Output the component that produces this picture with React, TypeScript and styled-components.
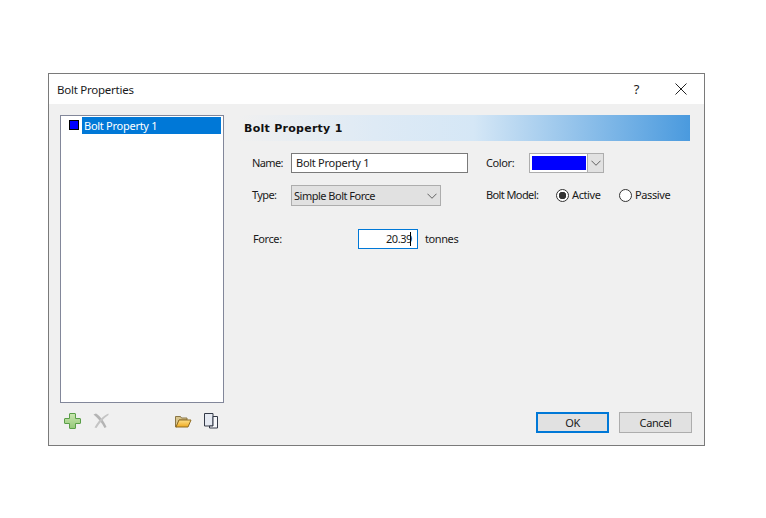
import styled, { createGlobalStyle } from "styled-components";

const GlobalStyle = createGlobalStyle`
  html, body {
    margin: 0;
    background: #fff;
  }
  body {
    font-family: "Noto Sans", "Open Sans", sans-serif;
    font-size: 11px;
    letter-spacing: -0.4px;
    color: #1a1a1a;
  }
`;

function App() {
  return (
    <Page>
      <GlobalStyle />
      <Dialog>
        <TitleBar>
          <Title>Bolt Properties</Title>
          <HelpButton>?</HelpButton>
          <CloseIcon viewBox="0 0 12 12">
            <path d="M0.5 0.5 L11.5 11.5 M11.5 0.5 L0.5 11.5" />
          </CloseIcon>
        </TitleBar>
        <Body>
          <LeftColumn>
            <PropertyList>
              <ListRow>
                <Swatch />
                <SelectedItem>Bolt Property 1</SelectedItem>
              </ListRow>
            </PropertyList>
            <Toolbar>
              <ToolGroup>
                <svg width="18" height="18" viewBox="0 0 18 18">
                  <defs>
                    <linearGradient id="plusFill" x1="0" y1="0" x2="0" y2="1">
                      <stop offset="0" stopColor="#c9e6b0" />
                      <stop offset="1" stopColor="#94c878" />
                    </linearGradient>
                  </defs>
                  <path
                    d="M6 1.500h5q.5 0 .5 .5v4.500h4.500q.5 0 .5 .5v4q0 .5-.5 .5h-4.500v4.500q0 .5-.5 .5h-5q-.5 0-.5-.5v-4.500h-4.500q-.5 0-.5-.5v-4q0-.5 .5-.5h4.500v-4.500q0-.5 .5-.5z"
                    fill="url(#plusFill)"
                    stroke="#5a9e48"
                    strokeWidth="1"
                  />
                </svg>
                <svg width="18" height="18" viewBox="0 0 18 18">
                  <path
                    d="M1.500 2.500 L4 1.500 C8 4 12 9 14.500 15 L12.500 16 C10 11 6 6 1.500 2.500z"
                    fill="#b4b4b4"
                  />
                  <path
                    d="M16.500 1.500 C11 4 6 9 2.500 15.500 L4.500 16 C7.500 11 12 6 16.500 3z"
                    fill="#c4c4c4"
                  />
                </svg>
              </ToolGroup>
              <ToolGroup>
                <svg width="18" height="18" viewBox="0 0 18 18">
                  <defs>
                    <linearGradient id="folderFill" x1="0" y1="0" x2="0" y2="1">
                      <stop offset="0" stopColor="#fde08a" />
                      <stop offset="1" stopColor="#efa91f" />
                    </linearGradient>
                  </defs>
                  <path d="M1.500 15V4.500h5l1 1.500h5.500v2H5L2.500 15z" fill="#d8c58e" stroke="#8a7646" />
                  <path d="M5 8h12l-3 7H2z" fill="url(#folderFill)" stroke="#8f6c22" />
                </svg>
                <svg width="18" height="18" viewBox="0 0 18 18">
                  <path d="M2.500 1.500h8.500v12.500h-8.500z" fill="#e6eaf2" stroke="#343a48" />
                  <path d="M11 4.500h4.500v11.500h-8v-2h3.500z" fill="#f7f8fb" stroke="#343a48" />
                </svg>
              </ToolGroup>
            </Toolbar>
          </LeftColumn>
          <RightColumn>
            <Banner>Bolt Property 1</Banner>
            <Form>
              <FormRow>
                <NameLabel>Name:</NameLabel>
                <NameInput>Bolt Property 1</NameInput>
                <ColorLabel>Color:</ColorLabel>
                <ColorPicker>
                  <ColorFill />
                  <ColorArrow>
                    <Chevron />
                  </ColorArrow>
                </ColorPicker>
              </FormRow>
              <TypeRow>
                <NameLabel>Type:</NameLabel>
                <TypeSelect>
                  Simple Bolt Force
                  <Chevron />
                </TypeSelect>
                <ModelLabel>Bolt Model:</ModelLabel>
                <RadioOption $width={63}>
                  <Radio $checked />
                  Active
                </RadioOption>
                <RadioOption $width={60}>
                  <Radio />
                  Passive
                </RadioOption>
              </TypeRow>
              <ForceRow>
                <ForceLabel>Force:</ForceLabel>
                <ForceInput>
                  20.39
                  <Caret />
                </ForceInput>
                <span>tonnes</span>
              </ForceRow>
            </Form>
            <Actions>
              <ActionButton $primary>OK</ActionButton>
              <ActionButton>Cancel</ActionButton>
            </Actions>
          </RightColumn>
        </Body>
      </Dialog>
    </Page>
  );
}

function Chevron() {
  return (
    <ChevronIcon viewBox="0 0 11 6">
      <path d="M0.500 0.500 L5.500 5.500 L10.500 0.500" />
    </ChevronIcon>
  );
}

export default App;

const Page = styled.div`
  width: 766px;
  height: 518px;
  padding: 73px 0 0 48px;
  box-sizing: border-box;
`;

const Dialog = styled.div`
  width: 657px;
  height: 373px;
  box-sizing: border-box;
  border: 1px solid #7a7a7a;
  background: #f0f0f0;
  display: flex;
  flex-direction: column;
`;

const TitleBar = styled.div`
  height: 30px;
  background: #fff;
  display: flex;
  align-items: center;
  padding: 0 17px 0 8px;
`;

const Title = styled.div`
  font-size: 11.5px;
  letter-spacing: -0.25px;
  flex: 1;
`;

const HelpButton = styled.div`
  font-size: 13px;
  margin-right: 36px;
`;

const CloseIcon = styled.svg`
  width: 12px;
  height: 12px;
  fill: none;
  stroke: #222;
  stroke-width: 1;
`;

const Body = styled.div`
  flex: 1;
  display: flex;
  padding: 11px 12px 12px 11px;
`;

const LeftColumn = styled.div`
  width: 164px;
  display: flex;
  flex-direction: column;
`;

const PropertyList = styled.div`
  height: 288px;
  box-sizing: border-box;
  border: 1px solid #82879a;
  background: #fff;
  padding: 1px 2px;
`;

const ListRow = styled.div`
  display: flex;
  align-items: center;
  padding-left: 6px;
  gap: 3px;
`;

const Swatch = styled.div`
  width: 10px;
  height: 10px;
  box-sizing: border-box;
  border: 1px solid #000;
  background: #0000ff;
  margin-top: -1px;
`;

const SelectedItem = styled.div`
  flex: 1;
  height: 17px;
  line-height: 17px;
  letter-spacing: -0.27px;
  background: #0078d7;
  color: #fff;
  padding-left: 2px;
`;

const Toolbar = styled.div`
  display: flex;
  justify-content: space-between;
  padding: 9px 4px 0 4px;
`;

const ToolGroup = styled.div`
  display: flex;
  gap: 10px;
`;

const RightColumn = styled.div`
  flex: 1;
  margin-left: 15px;
  display: flex;
  flex-direction: column;
`;

const Banner = styled.div`
  height: 26px;
  line-height: 28px;
  width: 451px;
  padding-left: 5px;
  box-sizing: border-box;
  font-family: "DejaVu Sans", sans-serif;
  font-weight: 700;
  font-size: 11px;
  letter-spacing: 0.27px;
  color: #111;
  background: linear-gradient(
    to right,
    #f0f0f0 0%,
    #deeaf5 30%,
    #d5e7f6 52%,
    #4a9ade 100%
  );
`;

const Form = styled.div`
  flex: 1;
  padding: 12px 0 0 13px;
`;

const FormRow = styled.div`
  display: flex;
  align-items: center;
  height: 20px;
  line-height: 18px;
`;

const TypeRow = styled(FormRow)`
  height: 21px;
  margin-top: 12px;
`;

const ForceRow = styled(FormRow)`
  margin-top: 23px;
`;

const NameLabel = styled.div`
  width: 39px;
  margin-top: -1px;
  letter-spacing: -0.6px;
`;

const NameInput = styled.div`
  width: 177px;
  height: 20px;
  letter-spacing: -0.27px;
  box-sizing: border-box;
  border: 1px solid #7a7a7a;
  background: #fff;
  padding-left: 4px;
`;

const ColorLabel = styled.div`
  margin-left: 18px;
  width: 43px;
  margin-top: -1px;
`;

const ColorPicker = styled.div`
  width: 75px;
  height: 20px;
  box-sizing: border-box;
  display: flex;
  border: 1px solid #adadad;
  background: #fff;
`;

const ColorFill = styled.div`
  flex: 1;
  margin: 2px 1px 2px 2px;
  background: #0000ff;
`;

const ColorArrow = styled.div`
  width: 16px;
  box-sizing: border-box;
  border-left: 1px solid #adadad;
  background: #e1e1e1;
  display: flex;
  align-items: center;
  justify-content: center;
`;

const ChevronIcon = styled.svg`
  width: 10px;
  height: 6px;
  fill: none;
  stroke: #555;
  stroke-width: 1;
`;

const TypeSelect = styled.div`
  width: 150px;
  height: 21px;
  box-sizing: border-box;
  border: 1px solid #adadad;
  background: #e1e1e1;
  display: flex;
  align-items: center;
  justify-content: space-between;
  padding: 0 3px 0 2px;
  letter-spacing: -0.5px;
`;

const ModelLabel = styled.div`
  margin-left: 45px;
  width: 70px;
  margin-top: -1px;
  letter-spacing: -0.6px;
`;

const RadioOption = styled.div<{ $width: number }>`
  width: ${(p) => p.$width}px;
  display: flex;
  align-items: center;
  gap: 3px;
  margin-top: -1px;
`;

const Radio = styled.div<{ $checked?: boolean }>`
  width: 13px;
  height: 13px;
  box-sizing: border-box;
  border: 1px solid #333;
  border-radius: 50%;
  background: ${(p) =>
    p.$checked ? "radial-gradient(circle, #333 0 3.5px, #fff 4px)" : "#fff"};
`;

const ForceLabel = styled.div`
  width: 105px;
  padding-left: 1px;
  margin-top: -1px;
`;

const ForceInput = styled.div`
  width: 60px;
  height: 20px;
  box-sizing: border-box;
  border: 1px solid #0078d7;
  background: #fff;
  text-align: right;
  padding-right: 5px;
  margin-right: 7px;
  position: relative;
`;

const Caret = styled.span`
  position: absolute;
  right: 6px;
  top: 2px;
  width: 1px;
  height: 14px;
  background: #000;
`;

const Actions = styled.div`
  display: flex;
  justify-content: flex-end;
  gap: 10px;
  padding-right: 0;
`;

const ActionButton = styled.div<{ $primary?: boolean }>`
  width: 73px;
  height: 21px;
  line-height: ${(p) => (p.$primary ? 17 : 19)}px;
  box-sizing: border-box;
  text-align: center;
  background: #e1e1e1;
  border: ${(p) => (p.$primary ? "2px solid #0078d7" : "1px solid #adadad")};
`;
